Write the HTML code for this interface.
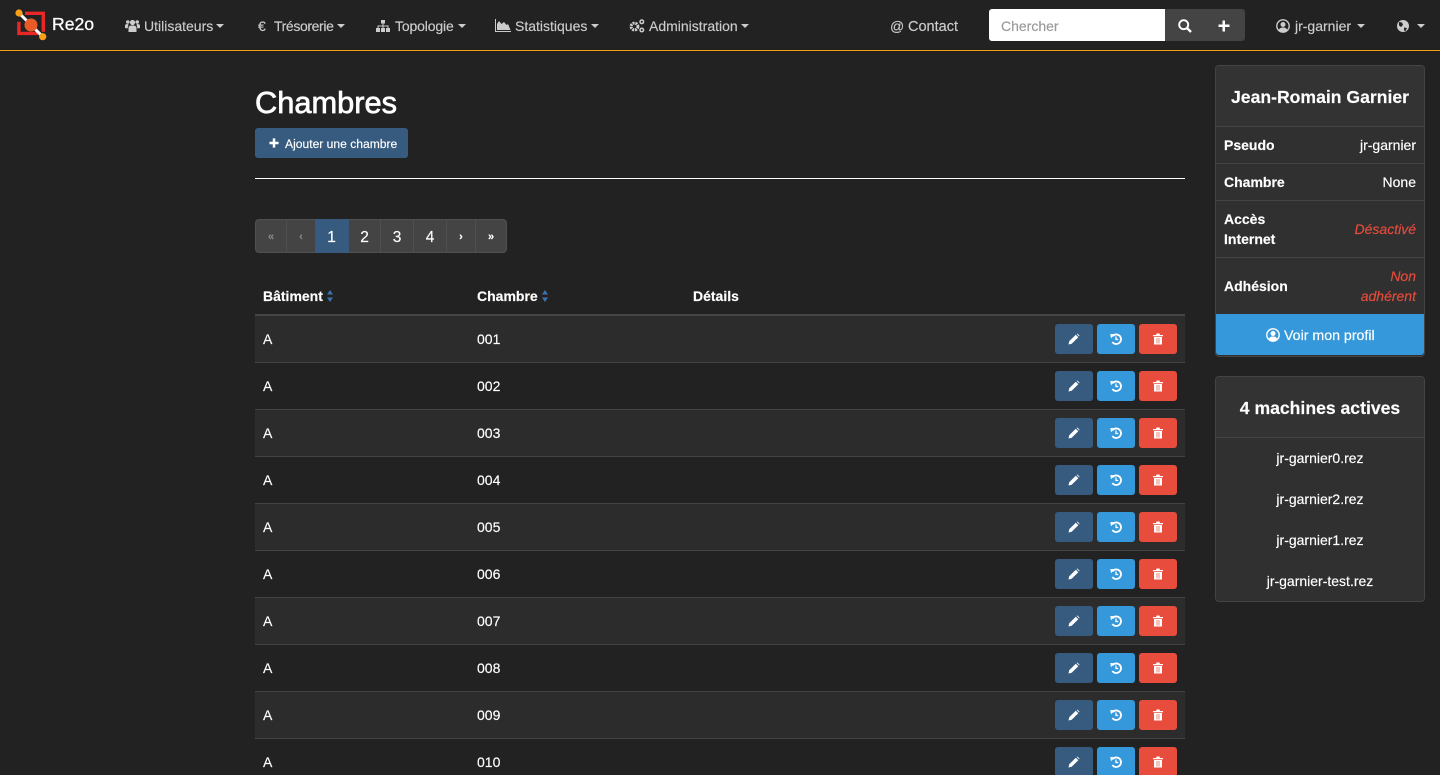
<!DOCTYPE html>
<html lang="fr"><head><meta charset="utf-8"><title>Chambres</title>
<style>
html,body{margin:0;padding:0;width:1440px;height:775px;overflow:hidden;background:#222;color:#fff;font-family:"Liberation Sans",sans-serif;font-size:14px}
#w{position:relative;width:1440px;height:775px;overflow:hidden;-webkit-text-stroke:.15px}
.a{position:absolute;white-space:nowrap}
.n{color:#ccc;font-size:14px;line-height:20px;top:16px}
.c{position:absolute;width:0;height:0;border-left:4px solid transparent;border-right:4px solid transparent;border-top:4px solid #ccc;top:24px}
svg{position:absolute;overflow:visible}
.row{position:absolute;left:255px;width:930px;height:46px;border-bottom:1px solid #444}
.row.o{background:#2c2c2c}
.row span{position:absolute;top:13px;line-height:20px}
.row .b{position:absolute;top:8px;width:38px;height:30px;border-radius:3px}
.e{left:800px;background:#375a7f}.h{left:842px;background:#3498db}.d{left:884px;background:#e74c3c}
.b svg{left:13px;top:9px;width:12px;height:12px}
.pg{position:absolute;top:219px;height:32px;background:#444;border:1px solid #505050;border-left:none;text-align:center;line-height:35px;font-size:15.500px;box-sizing:content-box}
.s{font-size:11px;font-weight:bold}
.card{position:absolute;left:1215px;width:208px;background:#303030;border:1px solid #444;border-radius:4px}
.l{position:absolute;left:1224px;font-weight:bold;font-size:14px;line-height:20px;white-space:nowrap}
.v{position:absolute;right:24px;font-size:14px;line-height:20px;white-space:nowrap;text-align:right}
.r{color:#e74c3c;font-style:italic}
.hr{position:absolute;left:1216px;width:208px;height:1px;background:#444}
.m{position:absolute;left:1216px;width:208px;text-align:center;font-size:14px;line-height:20px}
.t{position:absolute;left:1216px;width:208px;text-align:center;font-size:17.600px;line-height:22px;font-weight:bold}
.th{top:286px;font-weight:bold;font-size:14px;line-height:20px}
</style></head><body><div id="w">

<div class="a" style="left:0;top:50px;width:1440px;height:1px;background:#f39c12"></div>

<svg style="left:14px;top:8px" width="34" height="34" viewBox="0 0 34 34">
<path d="M11 5.300H29.300V23.700" fill="none" stroke="#e82727" stroke-width="3.400"/>
<path d="M4.900 13.700V25.400H24" fill="none" stroke="#e82727" stroke-width="3.400"/>
<path d="M5 5L28.700 28.700" stroke="#fff" stroke-width="3"/>
<circle cx="17" cy="17" r="6.500" fill="#ea5a26"/>
<circle cx="5" cy="5" r="3.600" fill="#f9a01b"/><circle cx="28.700" cy="28.700" r="3.600" fill="#f9a01b"/>
</svg>
<div class="a" style="left:52px;top:13px;font-size:17.600px;line-height:22px;color:#fff;-webkit-text-stroke:.3px #fff">Re2o</div>

<svg style="left:125px;top:19px" width="15" height="14" viewBox="0 0 15 14" fill="#ccc"><circle cx="7.500" cy="3.500" r="2.600"/><circle cx="2.800" cy="3" r="1.800"/><circle cx="12.200" cy="3" r="1.800"/><path d="M3.500 13V9C3.500 7 5 6.500 7.500 6.500S11.500 7 11.500 9V13ZM0 9V6.500C0 5.500 1 5 2.800 5L3.500 5.500 2.500 9.500ZM15 9V6.500C15 5.500 14 5 12.200 5L11.500 5.500 12.500 9.500Z"/></svg>
<div class="a n" style="left:144px">Utilisateurs</div><div class="c" style="left:216px"></div>

<div class="a n" style="left:258px">€</div>
<div class="a n" style="left:274px;letter-spacing:-.38px">Trésorerie</div><div class="c" style="left:337px"></div>

<svg style="left:376px;top:20px" width="14" height="12" viewBox="0 0 14 12" fill="#ccc"><rect x="5" y="0" width="4" height="3.500"/><rect x="0" y="8" width="4" height="4"/><rect x="5" y="8" width="4" height="4"/><rect x="10" y="8" width="4" height="4"/><path d="M6.500 3.500H7.500V5.500H12.500V8H11.500V6.500H7.500V8H6.500V6.500H2.500V8H1.500V5.500H6.500Z"/></svg>
<div class="a n" style="left:395px;letter-spacing:-.15px">Topologie</div><div class="c" style="left:458px"></div>

<svg style="left:495px;top:19px" width="16" height="13" viewBox="0 0 16 13" fill="#ccc"><path d="M0 0H1V12H16V13H0Z"/><path d="M2 11V5L4 2 6.500 5 9 3 11.500 6 13 5 15.500 11Z"/></svg>
<div class="a n" style="left:515px">Statistiques</div><div class="c" style="left:591px"></div>

<svg style="left:629px;top:19px" width="16" height="14" viewBox="0 0 16 14"><circle cx="5.500" cy="7.500" r="3.400" fill="none" stroke="#ccc" stroke-width="3" stroke-dasharray="2 .8"/><circle cx="12.800" cy="2.800" r="1.800" fill="none" stroke="#ccc" stroke-width="1.500"/><circle cx="12.800" cy="11" r="1.800" fill="none" stroke="#ccc" stroke-width="1.500"/></svg>
<div class="a n" style="left:649px">Administration</div><div class="c" style="left:741px"></div>

<div class="a n" style="left:890px">@</div>
<div class="a n" style="left:908px;font-size:14.500px;top:17px">Contact</div>

<div class="a" style="left:989px;top:9px;width:256px;height:32px;background:#444;border-radius:3px"></div>
<div class="a" style="left:989px;top:9px;width:176px;height:32px;background:#fff;border-radius:3px 0 0 3px;color:#999;font-size:14px;line-height:34px;text-indent:12px">Chercher</div>
<svg style="left:1178px;top:19px" width="14" height="14" viewBox="0 0 14 14" fill="none" stroke="#fff" stroke-width="1.900"><circle cx="5.700" cy="5.700" r="4.500"/><path d="M9 9L13 13" stroke-width="2.300"/></svg>
<svg style="left:1218px;top:20px" width="12" height="12" viewBox="0 0 12 12" fill="#fff"><path d="M4.500 0.500H7V4.500H11.500V7H7V11.500H4.500V7H0.500V4.500H4.500Z"/></svg>

<svg style="left:1276px;top:19px" width="14" height="14" viewBox="0 0 14 14"><circle cx="7" cy="7" r="6.200" fill="none" stroke="#ccc" stroke-width="1.400"/><circle cx="7" cy="5.500" r="2.500" fill="#ccc"/><path d="M2.800 11C3.500 9 5 8.500 7 8.500S10.500 9 11.200 11C10 12.500 8.500 13 7 13S4 12.500 2.800 11Z" fill="#ccc"/></svg>
<div class="a n" style="left:1295px">jr-garnier</div><div class="c" style="left:1357px"></div>
<svg style="left:1397px;top:20px" width="12" height="12" viewBox="0 0 12 12"><circle cx="6" cy="6" r="6" fill="#ccc"/><path d="M2 2L5 2.500 6 5 4 7 2 5.500ZM7 7.500L10 8 8.500 11 7 10.500Z" fill="#222"/></svg>
<div class="c" style="left:1417px"></div>

<div class="a" style="left:255px;top:85px;font-size:30.800px;line-height:36px;-webkit-text-stroke:.7px #fff">Chambres</div>

<div class="a" style="left:255px;top:128px;width:153px;height:30px;background:#375a7f;border-radius:3px"></div>
<svg style="left:269px;top:138px" width="10" height="10" viewBox="0 0 12 12" fill="#fff"><path d="M4.500 0.500H7.500V4.500H11.500V7.500H7.500V11.500H4.500V7.500H0.500V4.500H4.500Z"/></svg>
<div class="a" style="left:285px;top:135px;font-size:12.100px;line-height:18px">Ajouter une chambre</div>

<div class="a" style="left:255px;top:178px;width:930px;height:1px;background:#fff"></div>

<div class="pg s" style="left:255px;width:30px;border-left:1px solid #505050;border-radius:4px 0 0 4px;color:#888">«</div>
<div class="pg s" style="left:287px;width:28px;color:#888">‹</div>
<div class="pg" style="left:315px;width:33px;background:#375a7f;border-color:#375a7f">1</div>
<div class="pg" style="left:349px;width:31px">2</div>
<div class="pg" style="left:381px;width:32px">3</div>
<div class="pg" style="left:414px;width:32px">4</div>
<div class="pg s" style="left:447px;width:28px">›</div>
<div class="pg s" style="left:476px;width:30px;border-radius:0 4px 4px 0">»</div>

<div class="a th" style="left:263px">Bâtiment</div>
<svg style="left:327px;top:290px" width="6" height="12" viewBox="0 0 6 12" fill="#3a74ad"><path d="M3 0L6 4.500H0ZM3 12L0 7.500H6Z"/></svg>
<div class="a th" style="left:477px">Chambre</div>
<svg style="left:542px;top:290px" width="6" height="12" viewBox="0 0 6 12" fill="#3a74ad"><path d="M3 0L6 4.500H0ZM3 12L0 7.500H6Z"/></svg>
<div class="a th" style="left:693px">Détails</div>
<div class="a" style="left:255px;top:314px;width:930px;height:2px;background:#464545"></div>

<svg width="0" height="0" style="position:absolute"><defs>
<symbol id="pen" viewBox="0 0 12 12"><path d="M0.500 11.500L1.200 8.300 7.800 1.700 10.300 4.200 3.700 10.800ZM8.600 0.900L9.400 0.500 11.500 2.600 11.100 3.400Z" fill="#fff"/></symbol>
<symbol id="his" viewBox="0 0 12 12"><path d="M2.400 3.300A4.800 4.800 0 1 1 2.300 9" fill="none" stroke="#fff" stroke-width="1.800"/><path d="M0.300 1L4.800 1.200 1 5.200Z" fill="#fff"/><path d="M6 3.500V6.500H8.300" fill="none" stroke="#fff" stroke-width="1.300"/></symbol>
<symbol id="tr" viewBox="0 0 12 12"><path d="M1 2H4L4.500 .5H7.500L8 2H11V3.300H1ZM2 4H10V11.500H2Z" fill="#fff"/><path d="M5 5V10.500M7 5V10.500" stroke="#f0a199" stroke-width="1.300"/></symbol>
</defs></svg>

<div class="row o" style="top:316px"><span style="left:8px">A</span><span style="left:222px">001</span><div class="b e"><svg><use href="#pen"/></svg></div><div class="b h"><svg><use href="#his"/></svg></div><div class="b d"><svg><use href="#tr"/></svg></div></div>
<div class="row" style="top:363px"><span style="left:8px">A</span><span style="left:222px">002</span><div class="b e"><svg><use href="#pen"/></svg></div><div class="b h"><svg><use href="#his"/></svg></div><div class="b d"><svg><use href="#tr"/></svg></div></div>
<div class="row o" style="top:410px"><span style="left:8px">A</span><span style="left:222px">003</span><div class="b e"><svg><use href="#pen"/></svg></div><div class="b h"><svg><use href="#his"/></svg></div><div class="b d"><svg><use href="#tr"/></svg></div></div>
<div class="row" style="top:457px"><span style="left:8px">A</span><span style="left:222px">004</span><div class="b e"><svg><use href="#pen"/></svg></div><div class="b h"><svg><use href="#his"/></svg></div><div class="b d"><svg><use href="#tr"/></svg></div></div>
<div class="row o" style="top:504px"><span style="left:8px">A</span><span style="left:222px">005</span><div class="b e"><svg><use href="#pen"/></svg></div><div class="b h"><svg><use href="#his"/></svg></div><div class="b d"><svg><use href="#tr"/></svg></div></div>
<div class="row" style="top:551px"><span style="left:8px">A</span><span style="left:222px">006</span><div class="b e"><svg><use href="#pen"/></svg></div><div class="b h"><svg><use href="#his"/></svg></div><div class="b d"><svg><use href="#tr"/></svg></div></div>
<div class="row o" style="top:598px"><span style="left:8px">A</span><span style="left:222px">007</span><div class="b e"><svg><use href="#pen"/></svg></div><div class="b h"><svg><use href="#his"/></svg></div><div class="b d"><svg><use href="#tr"/></svg></div></div>
<div class="row" style="top:645px"><span style="left:8px">A</span><span style="left:222px">008</span><div class="b e"><svg><use href="#pen"/></svg></div><div class="b h"><svg><use href="#his"/></svg></div><div class="b d"><svg><use href="#tr"/></svg></div></div>
<div class="row o" style="top:692px"><span style="left:8px">A</span><span style="left:222px">009</span><div class="b e"><svg><use href="#pen"/></svg></div><div class="b h"><svg><use href="#his"/></svg></div><div class="b d"><svg><use href="#tr"/></svg></div></div>
<div class="row" style="top:739px"><span style="left:8px">A</span><span style="left:222px">010</span><div class="b e"><svg><use href="#pen"/></svg></div><div class="b h"><svg><use href="#his"/></svg></div><div class="b d"><svg><use href="#tr"/></svg></div></div>

<div class="card" style="top:65px;height:290px"></div>
<div class="a" style="left:1216px;top:66px;width:208px;height:60px;background:#333;border-radius:4px 4px 0 0"></div>
<div class="t" style="top:86px">Jean-Romain Garnier</div>
<div class="hr" style="top:126px"></div><div class="hr" style="top:163px"></div><div class="hr" style="top:200px"></div><div class="hr" style="top:257px"></div>
<div class="l" style="top:135px">Pseudo</div><div class="v" style="top:135px">jr-garnier</div>
<div class="l" style="top:172px">Chambre</div><div class="v" style="top:172px">None</div>
<div class="l" style="top:209px">Accès<br>Internet</div><div class="v r" style="top:219px">Désactivé</div>
<div class="l" style="top:276px">Adhésion</div><div class="v r" style="top:266px">Non<br>adhérent</div>
<div class="a" style="left:1216px;top:314px;width:208px;height:41px;background:#3498db;border-radius:0 0 3px 3px"></div>
<svg style="left:1266px;top:328px" width="14" height="14" viewBox="0 0 14 14"><circle cx="7" cy="7" r="6.200" fill="none" stroke="#fff" stroke-width="1.400"/><circle cx="7" cy="5.500" r="2.500" fill="#fff"/><path d="M2.800 11C3.500 9 5 8.500 7 8.500S10.500 9 11.200 11C10 12.500 8.500 13 7 13S4 12.500 2.800 11Z" fill="#fff"/></svg>
<div class="a" style="left:1284px;top:325.500px;font-size:14.200px;line-height:20px">Voir mon profil</div>

<div class="card" style="top:376px;height:224px"></div>
<div class="a" style="left:1216px;top:377px;width:208px;height:60px;background:#333;border-radius:4px 4px 0 0"></div>
<div class="t" style="top:397px">4 machines actives</div>
<div class="hr" style="top:437px"></div>
<div class="m" style="top:448px">jr-garnier0.rez</div>
<div class="m" style="top:489px">jr-garnier2.rez</div>
<div class="m" style="top:530px">jr-garnier1.rez</div>
<div class="m" style="top:571px">jr-garnier-test.rez</div>

</div></body></html>
